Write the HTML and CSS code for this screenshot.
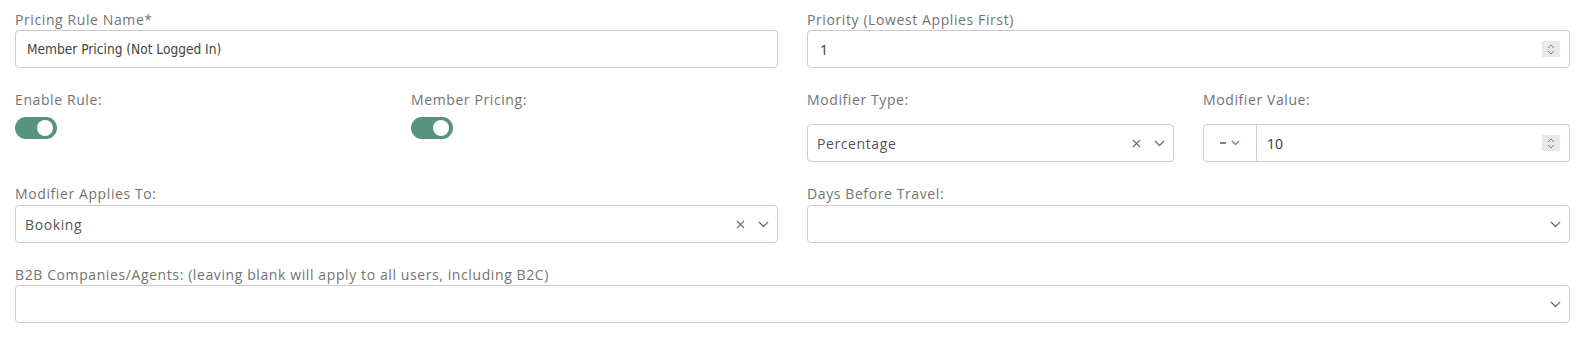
FILE: index.html
```html
<!DOCTYPE html>
<html lang="en">
<head>
    <meta charset="UTF-8">
    <meta name="viewport" content="width=device-width, initial-scale=1.0">
    <title>Pricing Rule</title>
    <link rel="stylesheet" href="styles.css">
</head>
<body>
<div class="form-grid">
    <div class="form-group">
        <label>Pricing Rule Name*</label>
        <input type="text" class="text-input" value="Member Pricing (Not Logged In)">
    </div>
    <div class="form-group">
        <label>Priority (Lowest Applies First)</label>
        <div class="number-input">
            <span class="number-value">1</span>
            <span class="spinner">
                <svg width="8" height="11" viewBox="0 0 8 11"><path d="M1 4l3-3 3 3M1 7l3 3 3-3" fill="none" stroke="#7a7a7a" stroke-width="1"/></svg>
            </span>
        </div>
    </div>

    <div class="sub-grid">
        <div class="form-group">
            <label>Enable Rule:</label>
            <div class="toggle on"><span class="knob"></span></div>
        </div>
        <div class="form-group">
            <label>Member Pricing:</label>
            <div class="toggle on"><span class="knob"></span></div>
        </div>
    </div>
    <div class="sub-grid">
        <div class="form-group spaced">
            <label>Modifier Type:</label>
            <div class="select">
                <span class="select-value">Percentage</span>
                <span class="indicators">
                    <svg class="clear" width="9" height="9" viewBox="0 0 9 9"><path d="M1 1l7 7M8 1l-7 7" stroke="#6f6f6f" stroke-width="1.2"/></svg>
                    <svg class="chevron" width="11" height="7" viewBox="0 0 11 7"><path d="M1 1l4.5 4.5L10 1" fill="none" stroke="#6f6f6f" stroke-width="1.3"/></svg>
                </span>
            </div>
        </div>
        <div class="form-group spaced">
            <label>Modifier Value:</label>
            <div class="input-group">
                <div class="addon">
                    <span class="sign"></span>
                    <svg width="9" height="6" viewBox="0 0 9 6"><path d="M1 1l3.5 3.5L8 1" fill="none" stroke="#579283" stroke-width="1.3"/></svg>
                </div>
                <div class="number-input joined">
                    <span class="number-value">10</span>
                    <span class="spinner">
                        <svg width="8" height="11" viewBox="0 0 8 11"><path d="M1 4l3-3 3 3M1 7l3 3 3-3" fill="none" stroke="#7a7a7a" stroke-width="1"/></svg>
                    </span>
                </div>
            </div>
        </div>
    </div>

    <div class="form-group tight">
        <label>Modifier Applies To:</label>
        <div class="select">
            <span class="select-value">Booking</span>
            <span class="indicators">
                <svg class="clear" width="9" height="9" viewBox="0 0 9 9"><path d="M1 1l7 7M8 1l-7 7" stroke="#6f6f6f" stroke-width="1.2"/></svg>
                <svg class="chevron" width="11" height="7" viewBox="0 0 11 7"><path d="M1 1l4.5 4.5L10 1" fill="none" stroke="#6f6f6f" stroke-width="1.3"/></svg>
            </span>
        </div>
    </div>
    <div class="form-group tight">
        <label>Days Before Travel:</label>
        <div class="select">
            <span class="select-value"></span>
            <span class="indicators">
                <svg class="chevron" width="11" height="7" viewBox="0 0 11 7"><path d="M1 1l4.5 4.5L10 1" fill="none" stroke="#6f6f6f" stroke-width="1.3"/></svg>
            </span>
        </div>
    </div>

    <div class="form-group full">
        <label>B2B Companies/Agents: (leaving blank will apply to all users, including B2C)</label>
        <div class="select">
            <span class="select-value"></span>
            <span class="indicators">
                <svg class="chevron" width="11" height="7" viewBox="0 0 11 7"><path d="M1 1l4.5 4.5L10 1" fill="none" stroke="#6f6f6f" stroke-width="1.3"/></svg>
            </span>
        </div>
    </div>
</div>
</body>
</html>
```

FILE: styles.css
```css
body {
    margin: 0;
    padding: 10px 16px 0 15px;
    background-color: #ffffff;
    font-family: "Open Sans", Arial, sans-serif;
    color: #555;
}
.form-grid {
    display: grid;
    grid-template-columns: 1fr 1fr;
    column-gap: 29px;
    row-gap: 22px;
}
.sub-grid {
    display: grid;
    grid-template-columns: 1fr 1fr;
    column-gap: 29px;
}
.form-group {
    display: flex;
    flex-direction: column;
}
.form-group label {
    font-size: 14px;
    line-height: 20px;
    letter-spacing: 0.6px;
    color: #737373;
}
.form-group .toggle {
    margin-top: 7px;
}
.form-group.spaced label {
    margin-bottom: 14px;
}
.form-group.tight label {
    margin-bottom: 1px;
}
.full {
    grid-column: 1 / 3;
}
.text-input {
    height: 38px;
    box-sizing: border-box;
    border: 1px solid #cccccc;
    border-radius: 4px;
    padding: 0 11px;
    font-family: "DejaVu Sans Condensed", "DejaVu Sans", sans-serif;
    font-size: 13.6px;
    color: #444;
    outline: none;
}
.number-input {
    display: flex;
    align-items: center;
    justify-content: space-between;
    height: 38px;
    box-sizing: border-box;
    border: 1px solid #cccccc;
    border-radius: 4px;
    padding: 0 9px 0 12px;
}
.number-value {
    font-family: "Noto Sans", sans-serif;
    font-size: 14px;
    color: #444;
}
.spinner {
    display: flex;
    align-items: center;
    justify-content: center;
    width: 18px;
    height: 16px;
    background-color: #e9e9ed;
}
.toggle {
    width: 42px;
    height: 22px;
    border-radius: 11px;
    background-color: #579283;
    display: flex;
    align-items: center;
    justify-content: flex-end;
    padding: 0 4px;
    box-sizing: border-box;
}
.toggle .knob {
    width: 16px;
    height: 16px;
    border-radius: 50%;
    background-color: #ffffff;
}
.select {
    display: flex;
    align-items: center;
    justify-content: space-between;
    height: 38px;
    box-sizing: border-box;
    border: 1px solid #cccccc;
    border-radius: 4px;
    padding: 0 8px 0 9px;
}
.select-value {
    font-size: 14px;
    letter-spacing: 0.6px;
    color: #555;
}
.indicators {
    display: flex;
    align-items: center;
    gap: 13px;
}
.input-group {
    display: flex;
    height: 38px;
}
.addon {
    width: 54px;
    box-sizing: border-box;
    border: 1px solid #cccccc;
    border-radius: 4px 0 0 4px;
    display: flex;
    align-items: center;
    justify-content: center;
    gap: 5px;
}
.addon .sign {
    width: 6px;
    height: 2px;
    background-color: #579283;
}
.number-input.joined {
    flex: 1;
    border-left: none;
    border-radius: 0 4px 4px 0;
    padding-left: 10px;
}
```
